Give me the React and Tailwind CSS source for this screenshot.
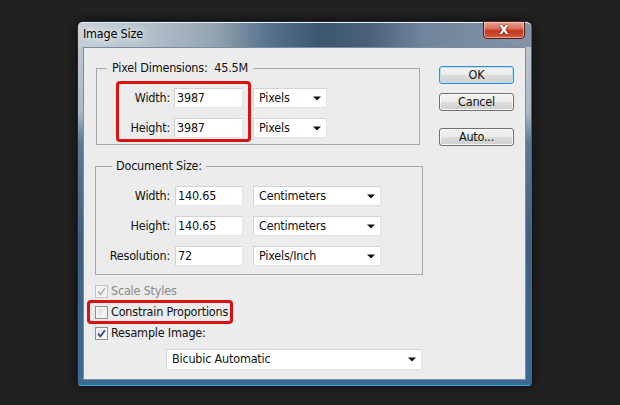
import React from "react";

function Arrow() {
  return (
    <svg width="8" height="5" viewBox="0 0 8 5" className="shrink-0">
      <path d="M0 0.5h8L4 4.5z" fill="#111" />
    </svg>
  );
}

function Select({ className, label }) {
  return (
    <div
      className={
        "flex items-center justify-between bg-white border border-[#e2e2e2] border-t-[#d4d4d4] border-l-[#d4d4d4] pl-[5px] pr-[5px] " +
        className
      }
    >
      <span>{label}</span>
      <Arrow />
    </div>
  );
}

function Input({ className, value }) {
  return (
    <div
      className={
        "flex items-center bg-white border border-[#e4e4e4] border-t-[#d2d2d2] border-l-[#d2d2d2] pl-[2px] " +
        className
      }
    >
      {value}
    </div>
  );
}

function PdRow({ label, value }) {
  return (
    <div className="flex items-center h-[20px]">
      <div className="w-[77px] pr-[4px] text-right">{label}</div>
      <Input className="w-[69px] h-[20px]" value={value} />
      <Select className="ml-[10px] w-[74px] h-[20px]" label="Pixels" />
    </div>
  );
}

function DsRow({ label, value, unit }) {
  return (
    <div className="flex items-center h-[20px]">
      <div className="w-[79px] pr-[5px] text-right">{label}</div>
      <Input className="w-[68px] h-[20px]" value={value} />
      <Select className="ml-[10px] w-[128px] h-[20px]" label={unit} />
    </div>
  );
}

function Check({ checked, disabled }) {
  return (
    <div
      className={
        "w-[13px] h-[13px] border p-[2px] flex items-center justify-center shrink-0 " +
        (disabled ? "border-[#c5c5c5] bg-[#f4f4f4]" : "border-[#8e8f8f] bg-[#f6f6f6]")
      }
    >
      <div
        className={
          "w-full h-full flex items-center justify-center " +
          (disabled ? "bg-[#f0f0f0]" : "bg-[linear-gradient(135deg,#dcdcdc,#fbfbfb)]")
        }
      >
        {checked && (
          <svg width="9" height="9" viewBox="0 0 9 9" className="-m-[1px]">
            <path
              d="M1 4.6L3.4 7.4L8 1.2"
              stroke={disabled ? "#b5b5b5" : "#2d4580"}
              strokeWidth="1.7"
              fill="none"
            />
          </svg>
        )}
      </div>
    </div>
  );
}

function Btn({ children, primary }) {
  return (
    <div
      className={
        "w-[75px] h-[18px] rounded-[3px] border flex items-center justify-center bg-[linear-gradient(#f3f3f3_0%,#ebebeb_48%,#dddddd_52%,#cfcfcf_100%)] " +
        (primary
          ? "border-[#3c8ccb] shadow-[inset_0_0_0_1px_#aee3f8]"
          : "border-[#707070] shadow-[inset_0_0_0_1px_#fafafa]")
      }
    >
      {children}
    </div>
  );
}

export default function App() {
  return (
    <div className="w-[620px] h-[405px] bg-[#212121] relative overflow-hidden font-['DejaVu_Sans_Condensed','Liberation_Sans',sans-serif] text-[12.5px] tracking-[-0.2px] text-[#111]">
      {/* window */}
      <div className="absolute left-[77px] top-[21px] w-[455px] h-[365px] rounded-t-[6px] rounded-b-[4px] border border-[#1b2836] border-b-[#3aa3de] border-r-[#2f6f9c] bg-[linear-gradient(#c3ccd4_0%,#aab8c5_25%,#5c7a96_33%,#3f607f_60%,#3b6a92_100%)] shadow-[0_0_10px_rgba(0,0,0,0.7)] flex flex-col">
        {/* title bar */}
        <div className="h-[25px] shrink-0 rounded-t-[5px] bg-[linear-gradient(90deg,#c6cfd7_0%,#b6c2cc_14%,#95a4b2_30%,#5a7790_41%,#3c566f_53%,#486179_64%,#6f859b_76%,#8494a6_100%)] border-t border-[#e8eef3] flex items-center pl-[5px]">
          <span className="text-[12.5px] text-[#000] [text-shadow:0_0_6px_#ffffff,0_0_10px_#ffffff] pb-[1px]">
            Image Size
          </span>
        </div>
        {/* close button */}
        <div className="absolute top-[-1px] right-[6px] w-[42px] h-[18px] rounded-b-[4px] border border-[#4a2018] bg-[linear-gradient(#e9a597_0%,#d8735f_40%,#c3381f_55%,#d3593c_100%)] shadow-[inset_0_0_0_1px_rgba(255,220,210,0.6)] flex items-center justify-center">
          <span className="text-white font-['DejaVu_Sans',sans-serif] font-bold text-[12px] leading-none tracking-normal [text-shadow:0_0_1px_#5a1a10,0_0_2px_#5a1a10]">
            X
          </span>
        </div>
        {/* client */}
        <div className="ml-[5px] w-[443px] h-[333px] bg-[#ececec] border border-[#7a8d9f] flex">
          {/* left column */}
          <div className="w-[340px] pl-[11px] pt-[12px] flex flex-col">
            {/* pixel dimensions */}
            <fieldset className="ml-[1px] w-[324px] border border-[#a9a9a9] pt-[12px] pb-[6px]">
              <legend className="ml-[10px] px-[5px] leading-[16px]">
                Pixel Dimensions:&nbsp;&nbsp;45.5M
              </legend>
              <div className="relative flex flex-col gap-[10px]">
                <PdRow label="Width:" value="3987" />
                <PdRow label="Height:" value="3987" />
                <div className="absolute left-[19px] top-[-7px] w-[135px] h-[61px] border-[3px] border-[#dd1111] rounded-[4px]" />
              </div>
            </fieldset>
            {/* document size */}
            <fieldset className="mt-[13px] w-[328px] border border-[#a9a9a9] pt-[12px] pb-[8px]">
              <legend className="ml-[16px] px-[4px] leading-[16px]">Document Size:</legend>
              <div className="flex flex-col gap-[10px]">
                <DsRow label="Width:" value="140.65" unit="Centimeters" />
                <DsRow label="Height:" value="140.65" unit="Centimeters" />
                <DsRow label="Resolution:" value="72" unit="Pixels/Inch" />
              </div>
            </fieldset>
            {/* checkboxes */}
            <div className="mt-[6px] flex flex-col">
              <div className="h-[21px] flex items-center gap-[3px] text-[#8a8a8a]">
                <Check checked disabled />
                <span>Scale Styles</span>
              </div>
              <div className="relative h-[21px] flex items-center gap-[3px]">
                <Check />
                <span>Constrain Proportions</span>
                <div className="absolute left-[-8px] top-[-2px] w-[146px] h-[24px] border-[3px] border-[#dd1111] rounded-[4px]" />
              </div>
              <div className="h-[21px] flex items-center gap-[3px]">
                <Check checked />
                <span>Resample Image:</span>
              </div>
            </div>
            <Select className="mt-[5px] ml-[71px] w-[256px] h-[21px]" label="Bicubic Automatic" />
          </div>
          {/* buttons */}
          <div className="ml-[15px] pt-[18px] flex flex-col">
            <Btn primary>OK</Btn>
            <div className="mt-[9px]">
              <Btn>Cancel</Btn>
            </div>
            <div className="mt-[17px]">
              <Btn>Auto...</Btn>
            </div>
          </div>
        </div>
      </div>
    </div>
  );
}
